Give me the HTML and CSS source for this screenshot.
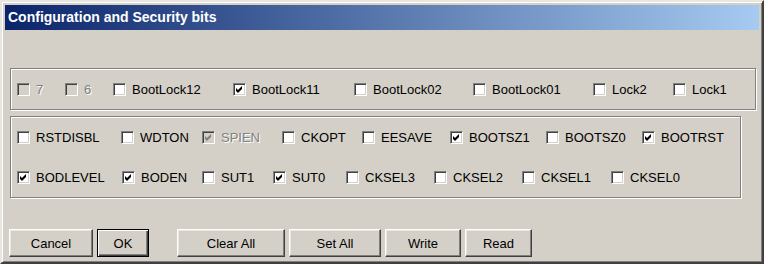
FILE: index.html
```html
<!DOCTYPE html>
<html lang="en">
<head>
    <meta charset="UTF-8">
    <title>Configuration and Security bits</title>
    <link rel="stylesheet" href="styles.css">
</head>
<body>
    <div class="window">
        <div class="titlebar">Configuration and Security bits</div>

        <!-- Lock bits -->
        <div class="group group-lock">
            <div class="row row-lock">
                <label class="chk disabled"><span class="box"></span>7</label>
                <label class="chk disabled"><span class="box"></span>6</label>
                <label class="chk"><span class="box"></span>BootLock12</label>
                <label class="chk checked"><span class="box"></span>BootLock11</label>
                <label class="chk"><span class="box"></span>BootLock02</label>
                <label class="chk"><span class="box"></span>BootLock01</label>
                <label class="chk"><span class="box"></span>Lock2</label>
                <label class="chk"><span class="box"></span>Lock1</label>
            </div>
        </div>

        <!-- Fuse bits -->
        <div class="group group-fuse">
            <div class="row row-fuse-hi">
                <label class="chk"><span class="box"></span>RSTDISBL</label>
                <label class="chk"><span class="box"></span>WDTON</label>
                <label class="chk checked disabled"><span class="box"></span>SPIEN</label>
                <label class="chk"><span class="box"></span>CKOPT</label>
                <label class="chk"><span class="box"></span>EESAVE</label>
                <label class="chk checked"><span class="box"></span>BOOTSZ1</label>
                <label class="chk"><span class="box"></span>BOOTSZ0</label>
                <label class="chk checked"><span class="box"></span>BOOTRST</label>
            </div>
            <div class="row row-fuse-lo">
                <label class="chk checked"><span class="box"></span>BODLEVEL</label>
                <label class="chk checked"><span class="box"></span>BODEN</label>
                <label class="chk"><span class="box"></span>SUT1</label>
                <label class="chk checked"><span class="box"></span>SUT0</label>
                <label class="chk"><span class="box"></span>CKSEL3</label>
                <label class="chk"><span class="box"></span>CKSEL2</label>
                <label class="chk"><span class="box"></span>CKSEL1</label>
                <label class="chk"><span class="box"></span>CKSEL0</label>
            </div>
        </div>

        <div class="buttons">
            <button class="btn btn-cancel">Cancel</button>
            <button class="btn btn-ok default">OK</button>
            <button class="btn btn-clear">Clear All</button>
            <button class="btn btn-set">Set All</button>
            <button class="btn btn-write">Write</button>
            <button class="btn btn-read">Read</button>
        </div>
    </div>

    <svg width="0" height="0" class="defs">
        <defs>
            <path id="tick" d="M3 5 L5 7 L9 3 L9 6 L5 10 L3 8 Z"/>
        </defs>
    </svg>

    <script>
        // put the tick into every checked box
        document.querySelectorAll(".chk.checked .box").forEach(function (box) {
            box.innerHTML = '<svg width="11" height="11" viewBox="1 1 11 11"><use href="#tick"/></svg>';
        });
    </script>
</body>
</html>
```

FILE: styles.css
```css
* {
    margin: 0;
    padding: 0;
    box-sizing: border-box;
}
body {
    background: #fff;
    font-family: "Liberation Sans", Arial, sans-serif;
    font-size: 13px;
    color: #000;
}
.defs {
    position: absolute;
}
.window {
    width: 764px;
    height: 264px;
    background: #d4d0c8;
    border: 2px solid;
    border-color: #e8e6e0 #404040 #404040 #e8e6e0;
    box-shadow: inset 1px 1px #fff, inset -1px -1px #808080;
    padding: 3px;
    display: flex;
    flex-direction: column;
    align-items: flex-start;
}
.titlebar {
    width: 100%;
    height: 25px;
    background: linear-gradient(to right, #0a246a, #a6caf0);
    color: #fff;
    font-weight: bold;
    font-size: 14px;
    line-height: 25px;
    padding-left: 3px;
}
/* group boxes */
.group {
    border: 1px solid #808080;
    box-shadow: inset 1px 1px #fff, 1px 1px #fff;
    margin-left: 5px;
    padding-left: 6px;
}
.group-lock {
    width: 746px;
    height: 42px;
    margin-top: 38px;
    display: flex;
    align-items: center;
}
.group-fuse {
    width: 731px;
    height: 82px;
    margin-top: 6px;
    display: grid;
    grid-template-rows: 40px 40px;
    align-items: center;
}
.row {
    display: grid;
    align-items: center;
}
.row-lock {
    grid-template-columns: 48px 48px 120px 121px 119px 120px 80px auto;
}
.row-fuse-hi {
    grid-template-columns: 104px 81px 80px 80px 88px 96px 96px auto;
}
.row-fuse-lo {
    grid-template-columns: 105px 80px 71px 73px 88px 88px 89px auto;
}
/* checkboxes */
.chk {
    display: flex;
    align-items: center;
    gap: 6px;
    white-space: nowrap;
    line-height: 15px;
}
.box {
    width: 13px;
    height: 13px;
    flex: none;
    background: #fff;
    border: 1px solid;
    border-color: #808080 #fff #fff #808080;
    box-shadow: inset 1px 1px #404040, inset -1px -1px #d4d0c8;
    display: flex;
}
.box svg {
    fill: #000;
}
.chk.disabled {
    color: #808080;
    text-shadow: 1px 1px #fff;
}
.chk.disabled .box {
    background: #d4d0c8;
}
.chk.disabled .box svg {
    fill: #808080;
}
/* buttons */
.buttons {
    display: flex;
    gap: 4px;
    margin-top: 31px;
    margin-left: 4px;
}
.btn {
    height: 28px;
    font-family: "Liberation Sans", Arial, sans-serif;
    font-size: 13px;
    color: #000;
    background: #d4d0c8;
    border: 1px solid;
    border-color: #fff #404040 #404040 #fff;
    box-shadow: inset -1px -1px #808080, inset 1px 1px #e8e6e0;
}
.btn.default {
    border: 1px solid #000;
    box-shadow: inset 1px 1px #fff, inset -1px -1px #404040, inset -2px -2px #808080;
}
.btn-cancel { width: 84px; }
.btn-ok { width: 52px; }
.btn-clear { width: 108px; margin-left: 24px; }
.btn-set { width: 92px; }
.btn-write { width: 76px; }
.btn-read { width: 67px; }
```
